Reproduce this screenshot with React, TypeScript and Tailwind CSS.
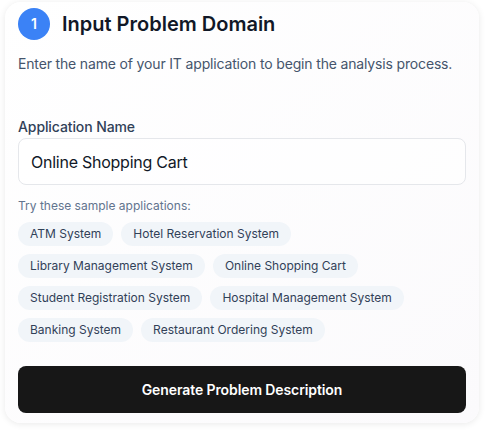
import React, { useState } from "react";

const SAMPLES = [
  "ATM System",
  "Hotel Reservation System",
  "Library Management System",
  "Online Shopping Cart",
  "Student Registration System",
  "Hospital Management System",
  "Banking System",
  "Restaurant Ordering System",
];

export default function App() {
  const [appName, setAppName] = useState("Online Shopping Cart");

  return (
    <div
      className="min-h-[432px] bg-white pt-[2px] pl-[5px]"
      style={{ fontFamily: "Inter, 'Noto Sans', sans-serif" }}
    >
      <div className="w-[474px] rounded-2xl bg-gradient-to-br from-white to-[#fbfafc] px-[13px] pt-[6px] pb-[10px] shadow-[0_1px_7px_rgba(0,0,0,0.09)]">
        {/* Step header */}
        <div className="flex items-center gap-3">
          <div className="flex h-8 w-8 items-center justify-center rounded-full bg-[#3b82f6] text-sm font-semibold text-white">
            1
          </div>
          <h2 className="text-xl font-semibold text-[#111827]">
            Input Problem Domain
          </h2>
        </div>
        <p className="mt-[14px] text-sm leading-5 tracking-[-0.16px] text-slate-600">
          Enter the name of your IT application to begin the analysis process.
        </p>

        <label className="mt-[43px] block text-sm font-medium leading-5 tracking-[-0.1px] text-slate-700">
          Application Name
        </label>
        <input
          value={appName}
          onChange={(e) => setAppName(e.target.value)}
          className="mt-[1px] h-[47px] w-full rounded-lg border border-gray-200 bg-white/60 px-3 text-base tracking-[-0.25px] text-[#111827] outline-none"
        />

        <p className="mt-[13px] text-xs leading-4 text-slate-500">
          Try these sample applications:
        </p>
        <div className="mt-2 flex flex-wrap gap-2">
          {SAMPLES.map((s) => (
            <button
              key={s}
              onClick={() => setAppName(s)}
              className="h-6 rounded-full bg-slate-100 px-3 text-xs text-slate-700"
            >
              {s}
            </button>
          ))}
        </div>

        <button className="mt-6 h-[47px] w-full rounded-lg bg-[#171717] text-sm font-semibold tracking-[-0.1px] text-white">
          Generate Problem Description
        </button>
      </div>
    </div>
  );
}
